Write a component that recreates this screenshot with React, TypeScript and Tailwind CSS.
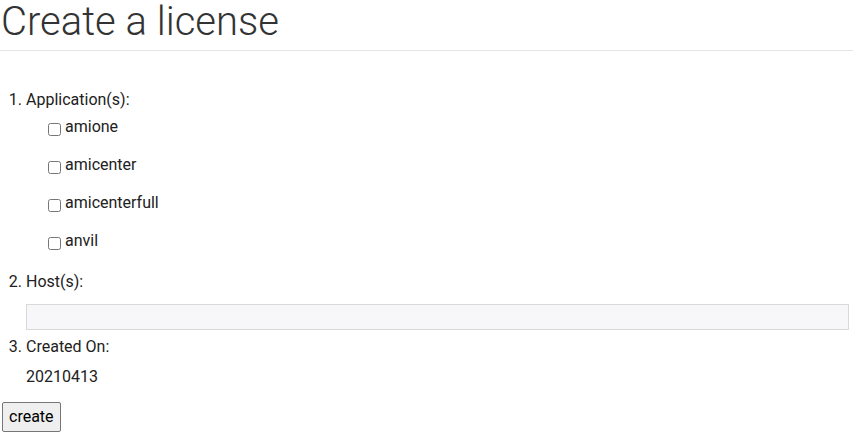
import { useState } from 'react';

const apps = ['amione', 'amicenter', 'amicenterfull', 'anvil'];

export default function App() {
  const [checked, setChecked] = useState<Record<string, boolean>>({});
  const [hosts, setHosts] = useState('');

  return (
    <div className="w-[853px] h-[433px] bg-white text-[16px] text-[#212121] font-['Roboto',sans-serif] overflow-hidden">
      <h1 className="h-[51px] border-b border-[#e5e5e5] text-[40px] font-light leading-[44px] text-[#333] pl-[1px]">
        Create a license
      </h1>

      <ol className="list-decimal pl-[26px] mt-[37px]">
        <li className="leading-[24px]">
          Application(s):
          <div className="flex flex-col gap-[14px] mt-[3px]">
            {apps.map(a => (
              <label key={a} className="flex items-center h-[24px] pl-[22px]">
                <input
                  type="checkbox"
                  checked={!!checked[a]}
                  onChange={e => setChecked(c => ({ ...c, [a]: e.target.checked }))}
                  className="w-[13px] h-[13px] m-0 mr-[4px] mt-[4px]"
                />
                {a}
              </label>
            ))}
          </div>
        </li>
        <li className="leading-[24px] mt-[17px]">
          Host(s):
          <input
            value={hosts}
            onChange={e => setHosts(e.target.value)}
            className="block w-[823px] h-[26px] mt-[10px] border border-[#d9d9d9] bg-[#f7f7f9] outline-none"
          />
        </li>
        <li className="leading-[24px] mt-[5px]">
          Created On:
          <div className="mt-[6px]">20210413</div>
        </li>
      </ol>

      <button className="ml-[2px] mt-[13px] h-[30px] px-[6px] border border-[#767676] rounded-[2px] bg-[#efefef] text-[16px] leading-[20px] text-black">
        create
      </button>
    </div>
  );
}
